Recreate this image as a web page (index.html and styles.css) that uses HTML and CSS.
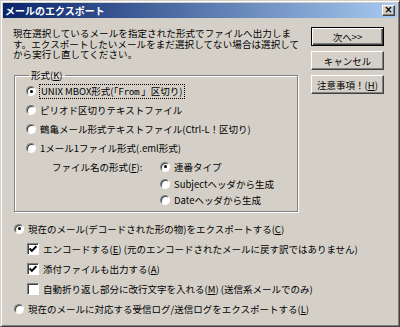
FILE: index.html
```html
<!DOCTYPE html>
<html lang="ja">
<head>
    <meta charset="UTF-8">
    <title>メールのエクスポート</title>
    <link rel="stylesheet" href="styles.css">
</head>
<body>
    <div class="window">
        <div class="titlebar">
            <span class="title">メールのエクスポート</span>
            <span class="close-btn">×</span>
        </div>

        <div class="content">
            <div class="top-row">
                <div class="main-col">
                    <p class="desc">現在選択しているメールを指定された形式でファイルへ出力しま<br>す。エクスポートしたいメールをまだ選択してない場合は選択して<br>から実行し直してください。</p>

                    <fieldset class="group">
                        <legend>形式(<u>K</u>)</legend>
                        <div class="opt"><span class="radio checked"></span><span class="focus">UNIX MBOX形式(「<span class="mono">From</span> 」区切り)</span></div>
                        <div class="opt"><span class="radio"></span>ピリオド区切りテキストファイル</div>
                        <div class="opt"><span class="radio"></span>鶴亀メール形式テキストファイル(Ctrl-L！区切り)</div>
                        <div class="opt"><span class="radio"></span>1メール1ファイル形式(.eml形式)</div>
                        <div class="naming">
                            <span class="naming-label">ファイル名の形式(<u>F</u>):</span>
                            <div class="naming-opts">
                                <div class="opt"><span class="radio checked"></span>連番タイプ</div>
                                <div class="opt"><span class="radio"></span>Subjectヘッダから生成</div>
                                <div class="opt"><span class="radio"></span>Dateヘッダから生成</div>
                            </div>
                        </div>
                    </fieldset>
                </div>

                <div class="buttons">
                    <button class="btn default">次へ&gt;&gt;</button>
                    <button class="btn">キャンセル</button>
                    <button class="btn">注意事項！(<u>H</u>)</button>
                </div>
            </div>

            <div class="bottom">
                <div class="opt"><span class="radio checked"></span>現在のメール(デコードされた形の物)をエクスポートする(<u>C</u>)</div>
                <div class="sub">
                    <div class="opt"><span class="check"><svg viewBox="0 0 7 7"><path d="M0.5 3 L2.5 5.2 L6.5 1" /></svg></span>エンコードする(<u>E</u>) (元のエンコードされたメールに戻す訳ではありません)</div>
                    <div class="opt"><span class="check"><svg viewBox="0 0 7 7"><path d="M0.5 3 L2.5 5.2 L6.5 1" /></svg></span>添付ファイルも出力する(<u>A</u>)</div>
                    <div class="opt"><span class="check"></span>自動折り返し部分に改行文字を入れる(<u>M</u>) (送信系メールでのみ)</div>
                </div>
                <div class="opt"><span class="radio"></span>現在のメールに対応する受信ログ/送信ログをエクスポートする(<u>L</u>)</div>
            </div>
        </div>
    </div>
</body>
</html>
```

FILE: styles.css
```css
body {
    margin: 0;
    background: #d4d0c8;
    font-family: "Noto Sans CJK JP", "DejaVu Sans", sans-serif;
    font-size: 9.5px;
    color: #000;
}

.window {
    width: 400px;
    height: 327px;
    box-sizing: border-box;
    background: #d4d0c8;
    border: 1px solid;
    border-color: #d4d0c8 #404040 #404040 #d4d0c8;
    box-shadow: inset 1px 1px 0 #fff, inset -1px -1px 0 #808080;
    padding: 2px;
}

.titlebar {
    height: 15px;
    display: flex;
    align-items: center;
    justify-content: space-between;
    padding: 0 2px 0 2px;
    background: linear-gradient(to right, #0a246a, #a6caf0);
}

.title {
    color: #fff;
    font-weight: bold;
    font-size: 10px;
    line-height: 15px;
}

.close-btn {
    width: 11px;
    height: 9px;
    line-height: 8px;
    text-align: center;
    font-size: 10px;
    font-weight: bold;
    font-family: "DejaVu Sans", sans-serif;
    background: #d4d0c8;
    border: 1px solid;
    border-color: #fff #404040 #404040 #fff;
    box-shadow: inset -1px -1px 0 #808080;
}

.content {
    padding: 10px 10px 0 10px;
}

.top-row {
    display: flex;
    justify-content: space-between;
}

.main-col {
    width: 285px;
}

.desc {
    margin: 0;
    line-height: 10.5px;
    white-space: nowrap;
    letter-spacing: 0.1px;
}

.group {
    margin: 10px 0 0 1px;
    padding: 1px 0 0 11px;
    border: 1px solid #808080;
    box-shadow: inset 1px 1px 0 #fff, 1px 1px 0 #fff;
    height: 142px;
    box-sizing: border-box;
    min-width: 0;
}

.group legend {
    padding: 0 2px;
    margin-left: 3px;
    line-height: 11px;
}

.opt {
    display: flex;
    align-items: center;
    height: 19px;
    white-space: nowrap;
}

.focus {
    outline: 1px dotted #000;
    padding: 0 1px;
    line-height: 12px;
}

.mono {
    font-family: "DejaVu Sans Mono", monospace;
    letter-spacing: -0.5px;
}

.radio {
    width: 8px;
    height: 8px;
    border-radius: 50%;
    background: #fff;
    border: 1px solid;
    border-color: #808080 #fff #fff #808080;
    box-shadow: inset 1px 1px 0 #404040;
    margin-right: 4px;
    position: relative;
    flex: none;
}

.radio.checked::after {
    content: "";
    position: absolute;
    left: 2.5px;
    top: 2.5px;
    width: 3px;
    height: 3px;
    border-radius: 50%;
    background: #000;
}

.naming {
    display: flex;
    margin-left: 26px;
}

.naming-label {
    width: 108px;
    height: 18px;
    line-height: 18px;
}

.naming-opts .opt {
    height: 16px;
}

.naming-opts .opt:first-child {
    height: 18px;
}

.buttons {
    display: flex;
    flex-direction: column;
    gap: 5px;
    margin-top: -1px;
    margin-right: 3px;
}

.btn {
    width: 73px;
    height: 19px;
    padding: 0;
    font-family: inherit;
    font-size: 9.5px;
    background: #d4d0c8;
    border: 1px solid;
    border-color: #fff #404040 #404040 #fff;
    box-shadow: inset -1px -1px 0 #808080;
    color: #000;
}

.btn.default {
    border-color: #000;
    box-shadow: inset 1px 1px 0 #fff, inset -1px -1px 0 #404040, inset -2px -2px 0 #808080;
}

.bottom {
    margin-top: 7px;
    padding-left: 1px;
}

.bottom .opt {
    height: 20px;
}

.bottom .sub {
    padding-left: 13px;
}

.check {
    width: 8px;
    height: 8px;
    padding: 1px;
    background: #fff;
    border: 1px solid;
    border-color: #808080 #fff #fff #808080;
    box-shadow: inset 1px 1px 0 #404040;
    margin-right: 4px;
    flex: none;
    display: flex;
}

.check svg {
    width: 8px;
    height: 8px;
    fill: none;
    stroke: #000;
    stroke-width: 1.7;
}
```
